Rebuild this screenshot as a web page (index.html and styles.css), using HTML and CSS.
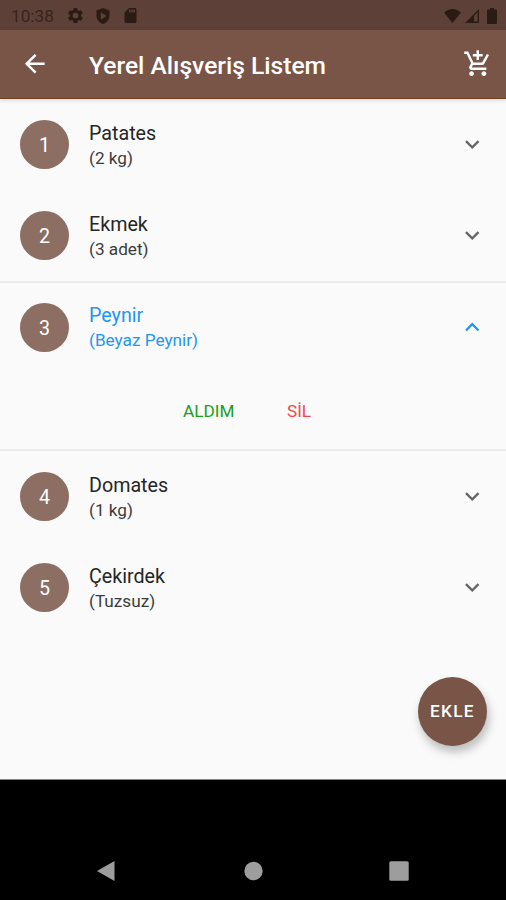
FILE: index.html
```html
<!DOCTYPE html>
<html lang="tr">
<head>
<meta charset="utf-8">
<title>Yerel Alışveriş Listem</title>
<link rel="stylesheet" href="styles.css">
</head>
<body>
<div class="screen">
  <div class="status">
    <span class="clock">10:38</span>
    <svg class="gear" viewBox="2 2 20 20"><path d="M19.4 13a7.500 7.500 0 0 0 0-2l2.100-1.600a.5.5 0 0 0 .1-.6l-2-3.500a.5.5 0 0 0-.6-.2l-2.500 1a7.300 7.300 0 0 0-1.700-1l-.4-2.600a.5.500 0 0 0-.5-.4h-4a.5.5 0 0 0-.5.400L9 5.100a7.700 7.700 0 0 0-1.700 1l-2.500-1a.5.5 0 0 0-.6.200l-2 3.500a.5.5 0 0 0 .1.600L4.500 11a8 8 0 0 0 0 2l-2.200 1.600a.5.5 0 0 0-.1.600l2 3.500c.1.200.4.300.6.200l2.500-1a7.300 7.300 0 0 0 1.700 1l.4 2.600c0 .3.200.4.500.4h4c.3 0 .5-.1.500-.4l.4-2.600a7.700 7.700 0 0 0 1.700-1l2.500 1c.2.100.5 0 .6-.2l2-3.500a.5.5 0 0 0-.1-.6zM12 15.800a3.800 3.800 0 1 1 0-7.600 3.800 3.800 0 0 1 0 7.600z"/></svg>
    <svg class="shield" viewBox="3 1 18 22"><path fill-rule="evenodd" d="M12 1 3 4.500V11c0 5.500 3.800 10.500 9 12 5.200-1.500 9-6.500 9-12V4.500zM9 7l8 5-8 5z"/></svg>
    <svg class="sd" viewBox="4 2 16 20"><path d="M18 2h-8L4 8v12c0 1.100.9 2 2 2h12c1.100 0 2-.9 2-2V4c0-1.100-.9-2-2-2zm-6 6h-2V4h2zm3 0h-2V4h2zm3 0h-2V4h2z"/></svg>
    <span class="grow"></span>
    <svg class="wifi" viewBox="0 0 24 20"><path d="M12 20 0 5.200C3.400 2 7.500 0 12 0s8.600 2 12 5.200z"/></svg>
    <svg class="signal" viewBox="0 0 20 20"><path fill-rule="evenodd" d="M0 20 20 0v20zM13 9.500V18h5V4.500z"/></svg>
    <svg class="battery" viewBox="7 2 10 20" preserveAspectRatio="none"><path d="M15.700 4H14V2h-4v2H8.300C7.600 4 7 4.600 7 5.300v15.300c0 .8.600 1.400 1.300 1.400h7.300c.8 0 1.400-.6 1.400-1.300V5.300c0-.7-.6-1.300-1.300-1.300z"/></svg>
  </div>
  <header class="bar">
    <svg class="icon" viewBox="0 0 24 24"><path d="M20 11H7.830l5.590-5.590L12 4l-8 8 8 8 1.410-1.410L7.830 13H20z"/></svg>
    <h1>Yerel Alışveriş Listem</h1>
    <svg class="icon" viewBox="0 0 24 24"><path d="M11 9h2V6h3V4h-3V1h-2v3H8v2h3zm-4 9c-1.100 0-1.990.9-1.990 2S5.900 22 7 22s2-.9 2-2-.9-2-2-2zm10 0c-1.100 0-1.990.9-1.990 2s.89 2 1.990 2 2-.9 2-2-.9-2-2-2zm-9.830-3.250.03-.12.900-1.630h7.450c.75 0 1.410-.41 1.750-1.030l3.860-7.010L19.420 4h-.01l-1.100 2-2.760 5H8.530l-.13-.27L6.160 6l-.95-2-.94-2H1v2h2l3.600 7.590-1.350 2.450c-.16.28-.25.61-.25.960 0 1.100.9 2 2 2h12v-2H7.420c-.13 0-.25-.11-.25-.25z"/></svg>
  </header>
  <main class="body">
    <div class="row"><span class="num">1</span><div class="txt"><b>Patates</b><i>(2 kg)</i></div><svg class="icon" viewBox="0 0 24 24"><path d="M16.590 8.590 12 13.170 7.410 8.590 6 10l6 6 6-6z"/></svg></div>
    <div class="row"><span class="num">2</span><div class="txt"><b>Ekmek</b><i>(3 adet)</i></div><svg class="icon" viewBox="0 0 24 24"><path d="M16.590 8.590 12 13.170 7.410 8.590 6 10l6 6 6-6z"/></svg></div>
    <section class="expanded">
      <div class="row"><span class="num">3</span><div class="txt"><b>Peynir</b><i>(Beyaz Peynir)</i></div><svg class="icon" viewBox="0 0 24 24"><path d="M12 8l-6 6 1.410 1.410L12 10.830l4.590 4.580L18 14z"/></svg></div>
      <div class="actions"><span class="take">ALDIM</span><span class="del">SİL</span></div>
    </section>
    <div class="row"><span class="num">4</span><div class="txt"><b>Domates</b><i>(1 kg)</i></div><svg class="icon" viewBox="0 0 24 24"><path d="M16.590 8.590 12 13.170 7.410 8.590 6 10l6 6 6-6z"/></svg></div>
    <div class="row"><span class="num">5</span><div class="txt"><b>Çekirdek</b><i>(Tuzsuz)</i></div><svg class="icon" viewBox="0 0 24 24"><path d="M16.590 8.590 12 13.170 7.410 8.590 6 10l6 6 6-6z"/></svg></div>
    <div class="fab">EKLE</div>
  </main>
  <nav class="nav">
    <svg viewBox="0 0 20 22"><path d="M1 11 18.500 1v20z"/></svg>
    <svg viewBox="0 0 20 22"><circle cx="10.500" cy="11" r="9.200"/></svg>
    <svg viewBox="0 0 20 22"><rect x=".3" y="1.300" width="19.400" height="19.400" rx="1.500"/></svg>
  </nav>
</div>
</body>
</html>
```
FILE: styles.css
```css
* { box-sizing: border-box; }
body { margin: 0; font-family: Roboto, "Noto Sans", sans-serif; }
svg { display: block; flex: none; fill: currentColor; }

.screen { width: 506px; height: 900px; display: flex; flex-direction: column; overflow: hidden; background: #000; }

.status { height: 30px; flex: none; display: flex; align-items: center; padding: 1px 9px 0 11px; background: #5d4138; color: #2b1b15; }
.clock { width: 57px; font-size: 17.2px; color: #38231c; }
.gear { width: 15px; height: 15px; }
.shield { width: 14px; height: 16px; margin-left: 13px; }
.sd { width: 13px; height: 15px; margin-left: 14px; }
.grow { flex: 1; }
.wifi { width: 17px; height: 14px; }
.signal { width: 14px; height: 14px; margin-left: 4px; }
.battery { width: 10px; height: 16px; margin-left: 8px; }

.bar { height: 69px; flex: none; display: flex; align-items: center; padding: 0 14px 0 20px; background: #795548; border-bottom: 1px solid #70401f; color: #fff; position: relative; z-index: 1; box-shadow: 0 1px 4px rgba(60, 45, 70, 0.22); }
.icon { width: 29.500px; height: 29.500px; }
.bar h1 { flex: 1; margin: 0 0 0 39.500px; padding-top: 4px; font-size: 24.600px; font-weight: 500; line-height: 30px; }

.body { height: 681px; flex: none; position: relative; background: #fafafa; border-bottom: 1px solid #858585; }
.row { height: 91px; display: flex; align-items: center; padding: 0 19.500px 0 20px; color: #666; }
.row .icon { width: 28.500px; height: 28.500px; }
.num { width: 49px; height: 49px; border-radius: 50%; background: #8d6e63; color: #fff; font-size: 19.700px; line-height: 51px; text-align: center; }
.txt { flex: 1; margin-left: 20px; }
.txt b, .txt i { display: block; font-weight: 400; font-style: normal; }
.txt b { font-size: 19.700px; line-height: 27px; color: #262626; }
.txt i { font-size: 17.200px; line-height: 23px; color: #3c3c3c; }
.expanded { height: 170px; border-top: 2px solid #ececec; border-bottom: 2px solid #ececec; }
.expanded .row { height: 88px; color: #2196f3; }
.expanded .txt b, .expanded .txt i { color: #2196f3; }
.actions { height: 80px; display: flex; align-items: center; padding-left: 183px; gap: 52.500px; font-size: 17.200px; }
.take { color: #18a020; }
.del { color: #f44848; }

.fab { position: absolute; right: 19px; bottom: 33.500px; width: 69px; height: 69px; border-radius: 50%; background: #795548; color: #fff; font-size: 17.200px; font-weight: 500; letter-spacing: 1.300px; line-height: 69px; text-align: center; box-shadow: 2px 6px 10px rgba(0, 0, 0, 0.25); }

.nav { flex: 1; display: flex; justify-content: space-between; align-items: flex-end; padding: 0 97px 18px 96px; color: #9d9d9d; }
.nav svg { width: 20px; height: 22px; }
```
